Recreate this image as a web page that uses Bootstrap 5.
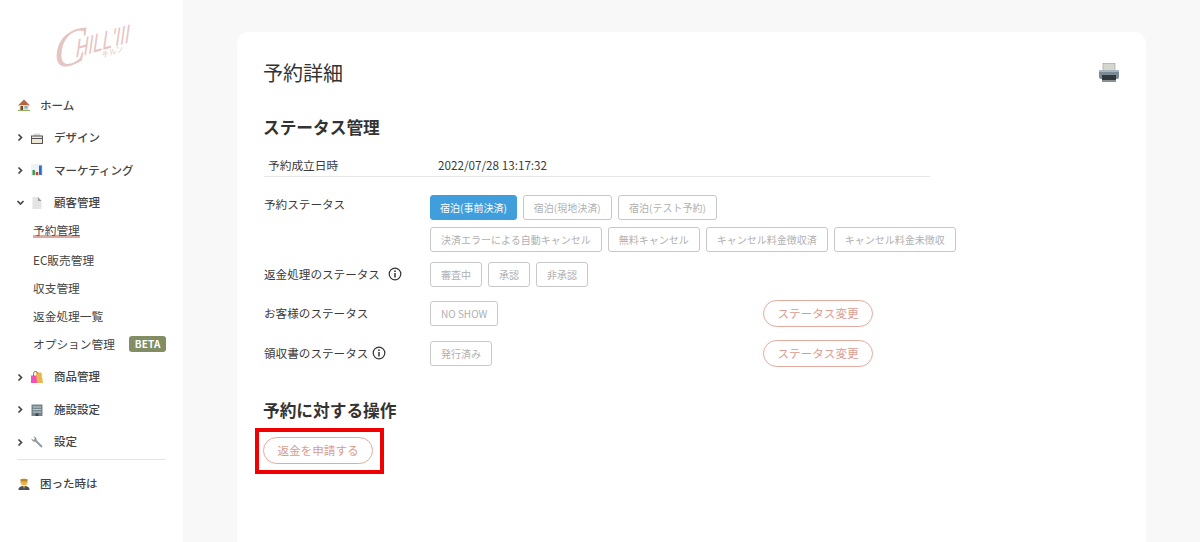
<!DOCTYPE html>
<html lang="ja">
<head>
<meta charset="utf-8">
<title>予約詳細</title>
<link href="https://cdn.jsdelivr.net/npm/bootstrap@5.3.0/dist/css/bootstrap.min.css" rel="stylesheet">
<style>
html,body{height:542px;overflow:hidden}
body{font-family:"Noto Sans CJK JP","Noto Sans",sans-serif;background:#f8f8f8;color:#3a3a3a;font-size:12px}
.shell{height:542px}
.side{width:183px;background:#fff;flex:none;padding:0 17px}
.logo-box{height:89px;padding-top:20px}
.logo-box svg{display:block;margin-left:36px;overflow:visible}
.logo-cap{font-family:"Liberation Serif",serif;font-style:italic;font-size:50px;fill:#e6c4c1}
.logo-big{font-family:"Liberation Sans",sans-serif;font-size:25px;fill:#e6c4c1}
.logo-small{font-family:"Noto Sans CJK JP",sans-serif;font-size:7.500px;fill:#e6c4c1}
.nav-row{height:32.5px;font-size:11.5px;font-weight:500;color:#444;display:flex;align-items:center;white-space:nowrap}
.chev{width:9px;height:9px;flex:none;margin-left:-1px;margin-right:5px;display:flex}
.ico{width:14px;height:14px;flex:none;margin-right:10px}
.ico-home{margin-right:9px}
.sub-wrap{margin-top:-2px;margin-bottom:2.5px}
.sub-row{height:28.25px;display:flex;align-items:center;padding-left:16px;font-size:11.7px;color:#444;white-space:nowrap}
.sub-on{display:inline-block;line-height:12px;border-bottom:3px solid #dba79f;height:14px}
.beta-tag{background:#828d63;color:#fff;font-size:10px;font-weight:700;border-radius:3px;padding:0 6px;line-height:16px;margin-left:14px;letter-spacing:.1px}
.side-line{border-top:1px solid #e4e4e4;margin:1px 0 0}
.help-row{margin-top:7px}
.main-area{padding:32px 54px 0 54px;min-width:0;flex:1}
.sheet{background:#fff;border-radius:12px 12px 0 0;height:510px;padding:24px 27px;width:909px}
.title-line{height:34px;font-size:20px;font-weight:400;color:#333;line-height:34px;margin-left:-1px;margin-right:-1px}
.sec-head{font-size:16.7px;font-weight:700;color:#333;line-height:24px;margin:0 0 0 -1px}
.sec-one{margin-top:25px}
.date-row{width:666px;height:22px;margin-top:16px;border-bottom:1px solid #e6e6e6;line-height:20px;padding-left:4px;font-size:11.7px}
.date-label{width:170px;flex:none}
.stat-label{width:166px;flex:none;font-size:11.6px;line-height:25px;color:#3a3a3a;white-space:nowrap}
.info-i{display:inline-block;width:14px;height:14px;vertical-align:-2px}
.tag-btn{height:25px;font-size:10px;line-height:23px;padding:0 10px;border:1px solid #c8c8c8;border-radius:3px;color:#b0b0b0;background:#fff;white-space:nowrap}
.tag-on{background:#3f9edb;border-color:#3f9edb;color:#fff;padding:0 9px}
.tag-wide{padding:0 10.500px}
.pill-btn{width:110px;height:27px;font-size:11.6px;line-height:25px;padding:0;border:1px solid #e3aa9e;border-radius:14px;color:#d99d90;background:#fff}
.mark-box{border:4px solid #f00000;padding:5px 4px;width:129px;height:46px;margin-left:-9px;margin-top:6px}
.sec-two{margin-top:31px}
.stat-top{margin-top:18px}
.stat-refund{margin-top:10px}
.stat-line{height:27px}
.stat-guest{margin-top:13px}
.stat-receipt{margin-top:13px}
.stat-label-top{line-height:18px}
.tag-slot{width:333px}
.gap-h{gap:6px}
.gap-v{gap:7px}
</style>
</head>
<body>
<div class="shell d-flex">
<aside class="side">
  <div class="logo-box">
    <svg width="80" height="52" viewBox="0 0 80 52" role="img" aria-label="Chill'in">
      <g transform="translate(1,50) rotate(-16) skewX(-16)"><text class="logo-cap" x="0" y="0">C</text></g>
      <g transform="translate(22,38) rotate(-16) skewX(-24)"><text class="logo-big" x="0" y="0" textLength="56" lengthAdjust="spacingAndGlyphs">HILL'III</text></g>
      <text class="logo-small" x="50" y="38" transform="rotate(-20 50 38)">チルン</text>
    </svg>
  </div>
  <div class="nav-row"><svg class="ico ico-home" viewBox="0 0 14 14"><path d="M1 7.500 7 1.500l6 6z" fill="#b5653f"/><rect x="2.500" y="7" width="9" height="5.500" fill="#ecdcb8"/><rect x="3.500" y="8" width="2.500" height="4.500" fill="#7a4a2c"/><rect x="7.500" y="8" width="3" height="2.500" fill="#6fb4d8"/><rect x="1" y="12" width="12" height="1" fill="#8fae62"/></svg><span>ホーム</span></div>
  <div class="nav-row"><svg class="chev" viewBox="0 0 9 9"><path d="M2.500 1.500 5.500 4.500 2.500 7.500" fill="none" stroke="#444" stroke-width="1.700"/></svg><svg class="ico" viewBox="0 0 14 14"><path d="M3.500 5V2.500h7V5z" fill="#d8d8d8"/><rect x="1.500" y="5" width="11" height="7.500" fill="#efe7d6" stroke="#555" stroke-width="1"/><rect x="1.500" y="7" width="11" height="1" fill="#555"/></svg><span>デザイン</span></div>
  <div class="nav-row"><svg class="chev" viewBox="0 0 9 9"><path d="M2.500 1.500 5.500 4.500 2.500 7.500" fill="none" stroke="#444" stroke-width="1.700"/></svg><svg class="ico" viewBox="0 0 14 14"><rect x="1" y="1" width="12" height="12" fill="#eef2f6"/><rect x="2.500" y="7" width="2.400" height="5" fill="#2e9e4f"/><rect x="5.800" y="9" width="2.400" height="3" fill="#d8342c"/><rect x="9" y="2.500" width="2.800" height="9.500" fill="#2f6fc4"/></svg><span>マーケティング</span></div>
  <div class="nav-row"><svg class="chev" viewBox="0 0 9 9"><path d="M1.500 3 4.500 6 7.500 3" fill="none" stroke="#444" stroke-width="1.700"/></svg><svg class="ico" viewBox="0 0 14 14"><path d="M2.500 1h5.500l3.500 4v8h-9z" fill="#e4e4e4"/><path d="M8 1l3.500 4H8z" fill="#9a9a9a"/></svg><span>顧客管理</span></div>
  <div class="sub-wrap">
    <div class="sub-row"><span class="sub-on">予約管理</span></div>
    <div class="sub-row">EC販売管理</div>
    <div class="sub-row">収支管理</div>
    <div class="sub-row">返金処理一覧</div>
    <div class="sub-row">オプション管理<span class="beta-tag">BETA</span></div>
  </div>
  <div class="nav-row"><svg class="chev" viewBox="0 0 9 9"><path d="M2.500 1.500 5.500 4.500 2.500 7.500" fill="none" stroke="#444" stroke-width="1.700"/></svg><svg class="ico" viewBox="0 0 14 14"><path d="M1 5.500h7v7.500H1z" fill="#f050b8"/><path d="M6 2.500h5.500L13 13H7z" fill="#e8b64c"/><path d="M3.500 6V3.500a2 2 0 0 1 4 0" fill="none" stroke="#a86a2a"/></svg><span>商品管理</span></div>
  <div class="nav-row"><svg class="chev" viewBox="0 0 9 9"><path d="M2.500 1.500 5.500 4.500 2.500 7.500" fill="none" stroke="#444" stroke-width="1.700"/></svg><svg class="ico" viewBox="0 0 14 14"><rect x="1.500" y="1.500" width="11" height="11.500" fill="#76848c"/><path d="M3 4h8M3 6.500h8M3 9h8" stroke="#c3ccd1"/><rect x="5.500" y="10.500" width="3" height="2.500" fill="#39444a"/></svg><span>施設設定</span></div>
  <div class="nav-row"><svg class="chev" viewBox="0 0 9 9"><path d="M2.500 1.500 5.500 4.500 2.500 7.500" fill="none" stroke="#444" stroke-width="1.700"/></svg><svg class="ico" viewBox="0 0 14 14"><path d="M5 5l7 7" stroke="#8d9aa3" stroke-width="2"/><path d="M1.500 3.500 3.500 5 5 3.500 3.500 1.500a3 3 0 0 1 3 4L5.500 6.500a3 3 0 0 1-4-3z" fill="#8d9aa3"/></svg><span>設定</span></div>
  <hr class="side-line opacity-100">
  <div class="nav-row help-row"><svg class="ico ico-home" viewBox="0 0 14 14"><circle cx="7" cy="5" r="3.500" fill="#e8b64c"/><path d="M3.500 4.500h7v-2.500h-7z" fill="#b98a2e"/><path d="M1.500 13c0-3 2-4 5.500-4s5.500 1 5.500 4z" fill="#4a4f55"/><path d="M6 9h2l-1 3z" fill="#e8b64c"/></svg><span>困った時は</span></div>
</aside>
<main class="main-area">
  <section class="sheet">
    <div class="title-line d-flex justify-content-between align-items-center">
      <span>予約詳細</span>
      <svg width="22" height="22" viewBox="0 0 22 22"><rect x="5" y="1.500" width="12" height="7" fill="#d6d6d0" stroke="#8c8c8c" stroke-width=".5"/><rect x="1" y="8" width="20" height="9" rx="2" fill="#7c8a96"/><rect x="1" y="8" width="20" height="2" rx="1" fill="#a9b5be"/><rect x="4" y="13" width="14" height="7" fill="#33383d"/><rect x="4" y="18" width="14" height="2" fill="#8c8f92"/></svg>
    </div>
    <h2 class="sec-head sec-one">ステータス管理</h2>
    <div class="date-row d-flex"><div class="date-label">予約成立日時</div><div>2022/07/28 13:17:32</div></div>
    <div class="d-flex stat-top">
      <div class="stat-label stat-label-top">予約ステータス</div>
      <div class="d-flex flex-column gap-v">
        <div class="d-flex gap-h"><button class="btn tag-btn tag-on">宿泊(事前決済)</button><button class="btn tag-btn">宿泊(現地決済)</button><button class="btn tag-btn tag-wide">宿泊(テスト予約)</button></div>
        <div class="d-flex gap-h"><button class="btn tag-btn">決済エラーによる自動キャンセル</button><button class="btn tag-btn">無料キャンセル</button><button class="btn tag-btn">キャンセル料金徴収済</button><button class="btn tag-btn">キャンセル料金未徴収</button></div>
      </div>
    </div>
    <div class="d-flex stat-refund">
      <div class="stat-label">返金処理のステータス<svg class="info-i ms-2" viewBox="0 0 14 14"><circle cx="7" cy="7" r="5.800" fill="none" stroke="#333" stroke-width="1.200"/><circle cx="7" cy="4.200" r=".9" fill="#333"/><path d="M7 6v4.500" stroke="#333" stroke-width="1.500"/></svg></div>
      <div class="d-flex gap-h"><button class="btn tag-btn">審査中</button><button class="btn tag-btn">承認</button><button class="btn tag-btn">非承認</button></div>
    </div>
    <div class="d-flex align-items-center stat-line stat-guest">
      <div class="stat-label">お客様のステータス</div>
      <div class="tag-slot"><button class="btn tag-btn">NO SHOW</button></div>
      <button class="btn pill-btn">ステータス変更</button>
    </div>
    <div class="d-flex align-items-center stat-line stat-receipt">
      <div class="stat-label">領収書のステータス<svg class="info-i ms-1" viewBox="0 0 14 14"><circle cx="7" cy="7" r="5.800" fill="none" stroke="#333" stroke-width="1.200"/><circle cx="7" cy="4.200" r=".9" fill="#333"/><path d="M7 6v4.500" stroke="#333" stroke-width="1.500"/></svg></div>
      <div class="tag-slot"><button class="btn tag-btn">発行済み</button></div>
      <button class="btn pill-btn">ステータス変更</button>
    </div>
    <h2 class="sec-head sec-two">予約に対する操作</h2>
    <div class="mark-box"><button class="btn pill-btn">返金を申請する</button></div>
  </section>
</main>
</div>
</body>
</html>
